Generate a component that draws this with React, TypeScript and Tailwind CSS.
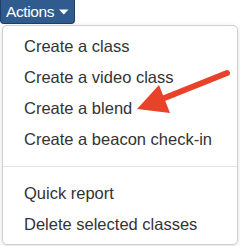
const items = ["Create a class", "Create a video class", "Create a blend", "Create a beacon check-in"];
const items2 = ["Quick report", "Delete selected classes"];

export default function App() {
  return (
    <div className="relative w-[240px] h-[246px] bg-white font-['Liberation_Sans',Arial,sans-serif] text-[16.5px] text-[#333]">
      <div className="flex flex-col items-start">
        <button className="flex items-center h-[24px] w-[75px] pl-[5px] bg-[#2f5b8f] border border-t-0 border-[#1f3d66] rounded-b-[4px] text-white text-[15.5px] tracking-[-0.4px] leading-none">
          <span>Actions</span>
          <svg width="10" height="6" viewBox="0 0 10 6" className="ml-[5px] mt-[1px]">
            <path d="M0 0.5 L9.5 0.5 L4.75 5.5 Z" fill="white" />
          </svg>
        </button>
        <div className="mt-[1px] ml-[2px] w-[236px] border border-[#cfcfcf] rounded-[5px] bg-white shadow-[0_2px_6px_rgba(0,0,0,0.12)] pt-[5px] pb-[4px]">
          {items.map((t) => (
            <div key={t} className="h-[31px] flex items-center pl-[21px]">{t}</div>
          ))}
          <div className="my-[11px] h-px bg-[#e3e3e3]" />
          {items2.map((t) => (
            <div key={t} className="h-[31px] flex items-center pl-[21px]">{t}</div>
          ))}
        </div>
      </div>
      <svg className="absolute left-0 top-0 pointer-events-none" width="240" height="246" viewBox="0 0 240 246">
        <line x1="227" y1="73" x2="162" y2="99" stroke="#e8432a" strokeWidth="6" strokeLinecap="round" />
        <polygon points="137,109 159,85 170,113" fill="#e8432a" />
      </svg>
    </div>
  );
}
